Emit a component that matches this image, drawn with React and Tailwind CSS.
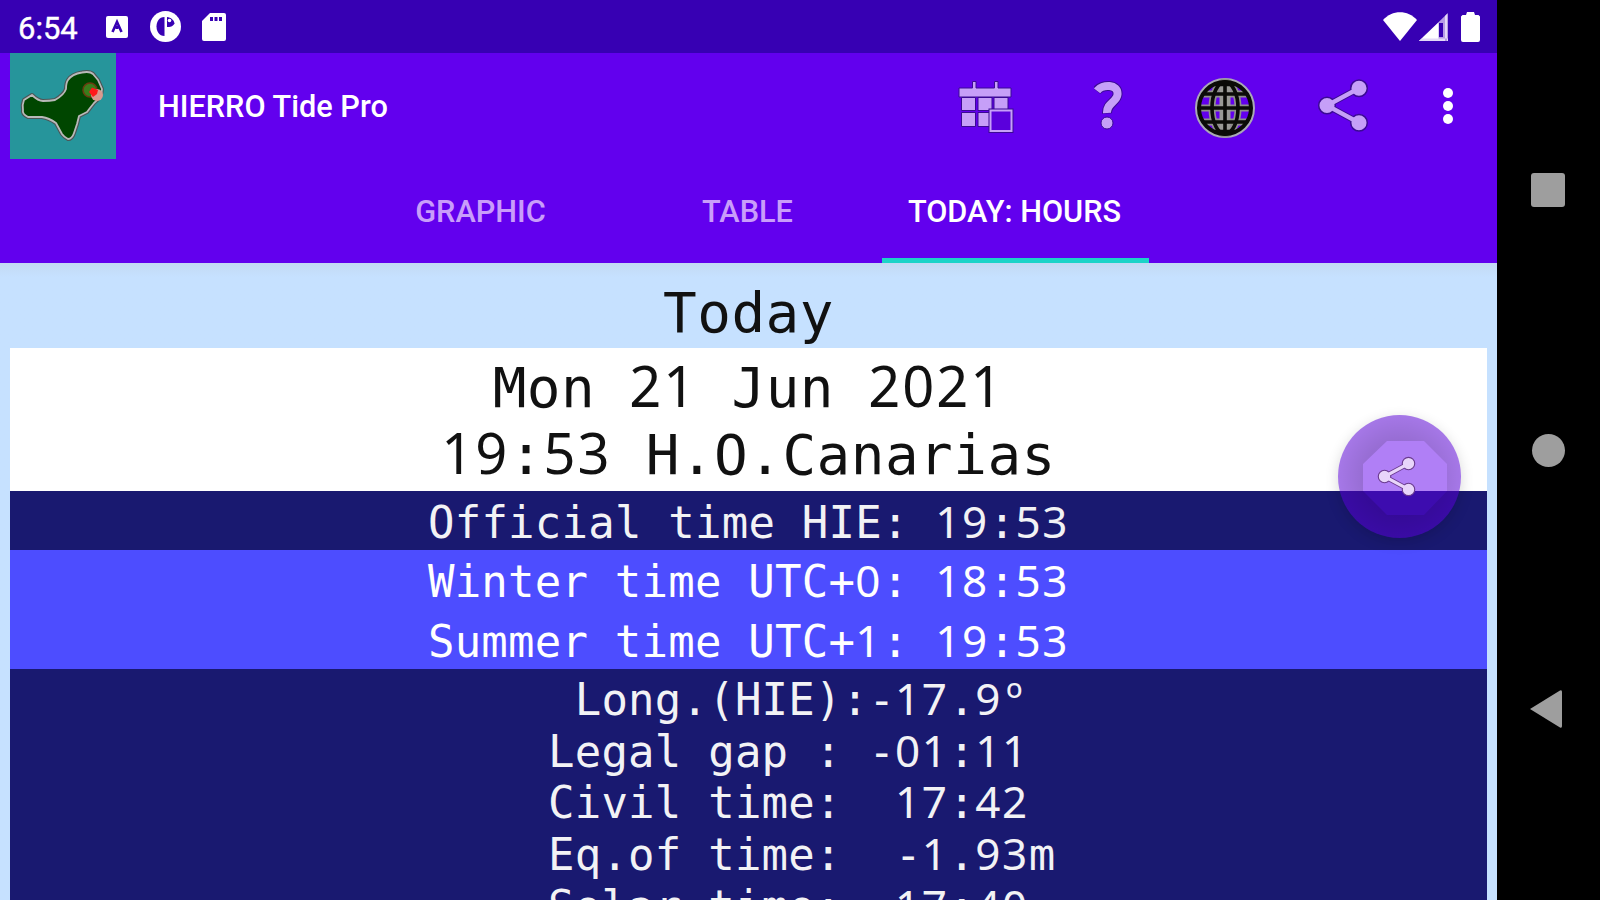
const BIG = "text-[56px] leading-[67px] tracking-[0.45px]";
const ROW = "text-[44px] tracking-[0.21px]";

const bands = [
	{ text: "Official time HIE: 19:53", className: "bg-[#191970] text-[#f2f2f5]" },
	{ text: "Winter time UTC+0: 18:53", className: "bg-[#4d4dff] text-white" },
	{ text: "Summer time UTC+1: 19:53", className: "bg-[#4d4dff] text-white" },
];

const details = [
	" Long.(HIE):-17.9º",
	"Legal gap : -01:11",
	"Civil time:  17:42",
	"Eq.of time:  -1.93m",
	"Solar time:  17:40",
];

const tabs = ["GRAPHIC", "TABLE", "TODAY: HOURS"];

const ISLAND =
	"M22 42 Q28 48 33 48 Q40 48 45 47 Q54 42 56 36 Q56 30 58 27 Q62 21 72 19.500 Q80 18 83 21 L88 27 L92 36 Q92 44 84 50 L80 55 L77 59 L69 63 L67 71 L64 80 Q62 86 58 86 Q54 84 52 81 L46 70 Q39 65 32 64 L18 64 Q12 61 13 57 Q12 52 14 47 Z";

// Digits use a plain-zero face, spaced out to the monospace pitch.
function Mono({ children }) {
	return children.split(/(\d+|º)/).map((part, i) => {
		if (part === "º") {
			return (
				<span key={i} className="font-['Noto_Sans',sans-serif] leading-[0] pl-[4px]">
					{part}
				</span>
			);
		}
		return /\d/.test(part) ? (
			<span key={i} className="font-['Noto_Sans',sans-serif] leading-[0] tracking-[0.0358em]">
				{part}
			</span>
		) : (
			part
		);
	});
}

function IslandIcon() {
	return (
		<svg className="w-[106px] h-[106px] bg-[#26959b]" viewBox="0 0 106 106">
			<path d={ISLAND} fill="#004600" stroke="#4c5556" strokeWidth="4" strokeLinejoin="round" />
			<path d={ISLAND} fill="#004600" stroke="#b9b9b9" strokeWidth="1.800" strokeLinejoin="round" />
			<circle cx="80" cy="37" r="7" fill="#3a7d1c" stroke="#6b3a10" strokeWidth="1.500" />
			<circle cx="87" cy="42" r="6" fill="#d99a90" />
			<path d="M79 39 L82 34.500 L88 37 L87 41 L83 44 Z" fill="#ff1a1a" />
		</svg>
	);
}

function CalendarIcon() {
	return (
		<svg className="w-[56px] h-[54px]" viewBox="0 0 56 54">
			<g fill="#c69ff8" stroke="#3b0a94" strokeWidth="1">
				<path d="M14.500 2.500h3.500v6.500h18.500V2.500h3.500v6.500H53v9H1V9h13.500z" />
				<path d="M3.500 18.500h14v13h-14zM20 18.500h14v13H20zM36 18.500h14v13H36zM3.500 33.500h14v14h-14zM20 33.500h14v14H20z" />
			</g>
			<path d="M32.500 31.500h21v20.500h-21z" fill="#6200ee" stroke="#3b0a94" strokeWidth="4" />
			<path d="M32.500 31.500h21v20.500h-21z" fill="#5a00dc" stroke="#c69ff8" strokeWidth="2" />
		</svg>
	);
}

function HelpIcon() {
	return (
		<svg className="w-[32px] h-[52px]" viewBox="0 0 32 52">
			<path d="M2.500 11 C8 4 24.500 3.500 23.500 14.500 C23 22 12.500 23 13 33.500" fill="none" stroke="#3b0a94" strokeWidth="10" />
			<path d="M3 10.800 C8 4 24.500 3.500 23.500 14.500 C23 22 12.500 23 13 33" fill="none" stroke="#c69ff8" strokeWidth="8" />
			<circle cx="13" cy="43" r="6" fill="#c69ff8" stroke="#3b0a94" />
		</svg>
	);
}

function GlobeIcon() {
	return (
		<svg className="w-[62px] h-[62px]" viewBox="0 0 62 62" fill="none">
			<circle cx="31" cy="31" r="28" stroke="#a9a9b5" strokeWidth="4" />
			<g stroke="#8f8f8a" strokeWidth="7">
				<path d="M31 6v50M6 31h50M9 17h44M9 45h44" />
				<ellipse cx="31" cy="31" rx="13" ry="26" />
			</g>
			<path d="M31 8v46" stroke="#9a9a96" strokeWidth="11" />
			<g stroke="#0b0b08" strokeWidth="3.600">
				<circle cx="31" cy="31" r="26" strokeWidth="4" />
				<path d="M31 4v54M4 31h54M8 17h46M8 45h46M21 7.500h20M21 54.500h20" />
				<ellipse cx="31" cy="31" rx="13" ry="26" />
			</g>
		</svg>
	);
}

function ShareIcon({ className, fill, edge }) {
	return (
		<svg className={className} viewBox="0 0 52 54.5">
			<path d="M42 10 L10 27.250 L42 44.500" fill="none" stroke={edge} strokeWidth="6.500" />
			<g fill={fill} stroke={edge} strokeWidth="1.500">
				<circle cx="42" cy="10" r="8.300" />
				<circle cx="10" cy="27.250" r="8.300" />
				<circle cx="42" cy="44.500" r="8.300" />
			</g>
			<path d="M42 10 L10 27.250 L42 44.500" fill="none" stroke={fill} strokeWidth="4.300" />
		</svg>
	);
}

function StatusBar() {
	return (
		<div className="h-[53px] bg-[#3700b3] flex items-center pl-[18px] pr-[17px] text-white">
			<span className="w-[88px] text-[31px] leading-none pt-[3px] [-webkit-text-stroke:0.4px_white]">6:54</span>
			<svg className="w-[22px] h-[22px]" viewBox="0 0 22 22">
				<rect width="22" height="22" rx="2" fill="#fff" />
				<path d="M6.500 16 L11 6 L15.500 16 M11 10v3" fill="none" stroke="#3700b3" strokeWidth="2.600" />
			</svg>
			<svg className="w-[31px] h-[31px] ml-[22px]" viewBox="0 0 31 31">
				<circle cx="15.500" cy="15.500" r="15.500" fill="#fff" />
				<path d="M14.500 6v19C9 25 6.500 20 6.500 15.500S9 6 14.500 6z" fill="#3700b3" />
				<path d="M17 6c4 .5 7 3 7.500 6.500-1.500 3-4.500 3.500-7.500 3.500z" fill="#3700b3" />
				<circle cx="19.500" cy="9.500" r="1.800" fill="#fff" />
			</svg>
			<svg className="w-[24px] h-[28px] ml-[21px]" viewBox="0 0 24 28">
				<path d="M8 0h14a2 2 0 0 1 2 2v24a2 2 0 0 1-2 2H2a2 2 0 0 1-2-2V8z" fill="#fff" />
				<path d="M8 4h3v4H8zM12.500 4h3v4h-3zM17 4h3v4h-3z" fill="#3700b3" />
			</svg>
			<svg className="w-[34px] h-[29px] ml-auto" viewBox="0 0 34 29">
				<path d="M17 29 L0 8 C9 -2.500 25 -2.500 34 8 Z" fill="#fff" />
			</svg>
			<svg className="w-[29px] h-[28px] ml-[2px]" viewBox="0 0 29 28">
				<path d="M29 0v28H0z" fill="#b79be6" />
				<path d="M19.500 9.500V28H0z" fill="#fff" />
				<path d="M20 10h4v14h-4z" fill="#3700b3" />
				<path d="M0 28h29v-2.500H3zM28 1v27h-2V3z" fill="#e3d8f7" />
			</svg>
			<svg className="w-[19px] h-[30px] ml-[13px]" viewBox="0 0 19 30">
				<path d="M6 0h7l1 3h3.500L19 4.500V28a2 2 0 0 1-2 2H2a2 2 0 0 1-2-2V4.500L1.500 3H5z" fill="#fff" />
			</svg>
		</div>
	);
}

function AppBar() {
	return (
		<div className="h-[210px] bg-[#6200ee]">
			<div className="h-[105px] flex items-center pl-[10px]">
				<IslandIcon />
				<h1 className="ml-[42px] text-[30.7px] leading-none font-medium text-white pt-[4px]">HIERRO Tide Pro</h1>
				<div className="ml-auto flex items-center pr-[43px]">
					<CalendarIcon />
					<div className="ml-[80px]">
						<HelpIcon />
					</div>
					<div className="ml-[68px] pt-1">
						<GlobeIcon />
					</div>
					<ShareIcon className="w-[52px] h-[55px] ml-[61px]" fill="#c69ff8" edge="#3b0a94" />
					<svg className="w-[12px] h-[38px] ml-[73px]" viewBox="0 0 12 38" fill="#fff">
						<circle cx="6" cy="6" r="5" />
						<circle cx="6" cy="19" r="5" />
						<circle cx="6" cy="32" r="5" />
					</svg>
				</div>
			</div>
			<div className="h-[105px] flex justify-center">
				{tabs.map((tab, i) => (
					<div
						key={tab}
						className={
							i === 2
								? "w-[267px] border-b-[5px] border-[#1cd3c8] flex items-center justify-center text-[30.7px] font-medium text-white whitespace-nowrap"
								: "w-[267px] border-b-[5px] border-transparent flex items-center justify-center text-[30.7px] font-medium text-[#c99dfa]"
						}>
						<span className="leading-none pt-2 pr-[2px]">{tab}</span>
					</div>
				))}
			</div>
		</div>
	);
}

function ShareButton() {
	return (
		<div className="absolute left-[1338px] top-[415px] w-[123px] h-[123px] rounded-full shadow-[0_4px_14px_rgba(0,0,0,0.16)]">
			<svg className="w-full h-full" viewBox="0 0 123 123">
				<defs>
					<radialGradient id="rim">
						<stop offset="0.600" stopColor="#000" stopOpacity="0.140" />
						<stop offset="1" stopColor="#000" stopOpacity="0.060" />
					</radialGradient>
				</defs>
				<circle cx="61.500" cy="61.500" r="61.500" fill="#6200ee" fillOpacity="0.500" />
				<path
					fillRule="evenodd"
					fill="url(#rim)"
					d="M0 61.500a61.500 61.500 0 1 1 123 0a61.500 61.500 0 1 1 -123 0zM49 26h37l23 23v27l-23 24H49L25 76V49z"
				/>
			</svg>
			<ShareIcon className="absolute left-[39px] top-[41px] w-[39px] h-[41px]" fill="#e8d5fa" edge="#6a3b8f" />
		</div>
	);
}

function NavBar() {
	return (
		<div className="flex-1 bg-black flex flex-col items-center pr-[1px]">
			<div className="mt-[173px] w-[34px] h-[34px] rounded-[3px] bg-[#9e9e9e]" />
			<div className="mt-[227px] w-[33px] h-[33px] rounded-full bg-[#9e9e9e]" />
			<svg className="mt-[222px] mr-[4px] w-[34px] h-[40px]" viewBox="0 0 34 40">
				<path d="M1 20 L31 1.500 Q33 .5 33 3 V37 Q33 39.500 31 38.500 Z" fill="#9e9e9e" />
			</svg>
		</div>
	);
}

export default function App() {
	return (
		<div className="relative w-[1600px] h-[900px] overflow-hidden flex bg-black font-[Roboto,sans-serif]">
			<div className="w-[1497px] h-full flex flex-col bg-[#c6e1ff]">
				<StatusBar />
				<AppBar />
				<main className="flex-1 min-h-0 overflow-hidden px-[10px] bg-linear-to-b from-[#c3d9f3] to-[#c6e1ff] to-[14px] font-['DejaVu_Sans_Mono',monospace] whitespace-pre">
					<h2 className={`h-[85px] pt-[16px] text-center text-[#111] ${BIG}`}>Today</h2>
					<div className={`h-[143px] pt-[6px] bg-white text-center text-[#111] ${BIG}`}>
						<p>
							<Mono>Mon 21 Jun 2021</Mono>
						</p>
						<p>
							<Mono>19:53 H.O.Canarias</Mono>
						</p>
					</div>
					{bands.map((band) => (
						<p key={band.text} className={`h-[59.3px] pt-[2px] leading-[59px] text-center ${ROW} ${band.className}`}>
							<Mono>{band.text}</Mono>
						</p>
					))}
					<div className={`h-[260px] pt-[5px] pl-[538px] bg-[#191970] text-[#f2f2f5] leading-[51.7px] ${ROW}`}>
						{details.map((line) => (
							<p key={line}>
								<Mono>{line}</Mono>
							</p>
						))}
					</div>
				</main>
			</div>
			<NavBar />
			<ShareButton />
		</div>
	);
}
